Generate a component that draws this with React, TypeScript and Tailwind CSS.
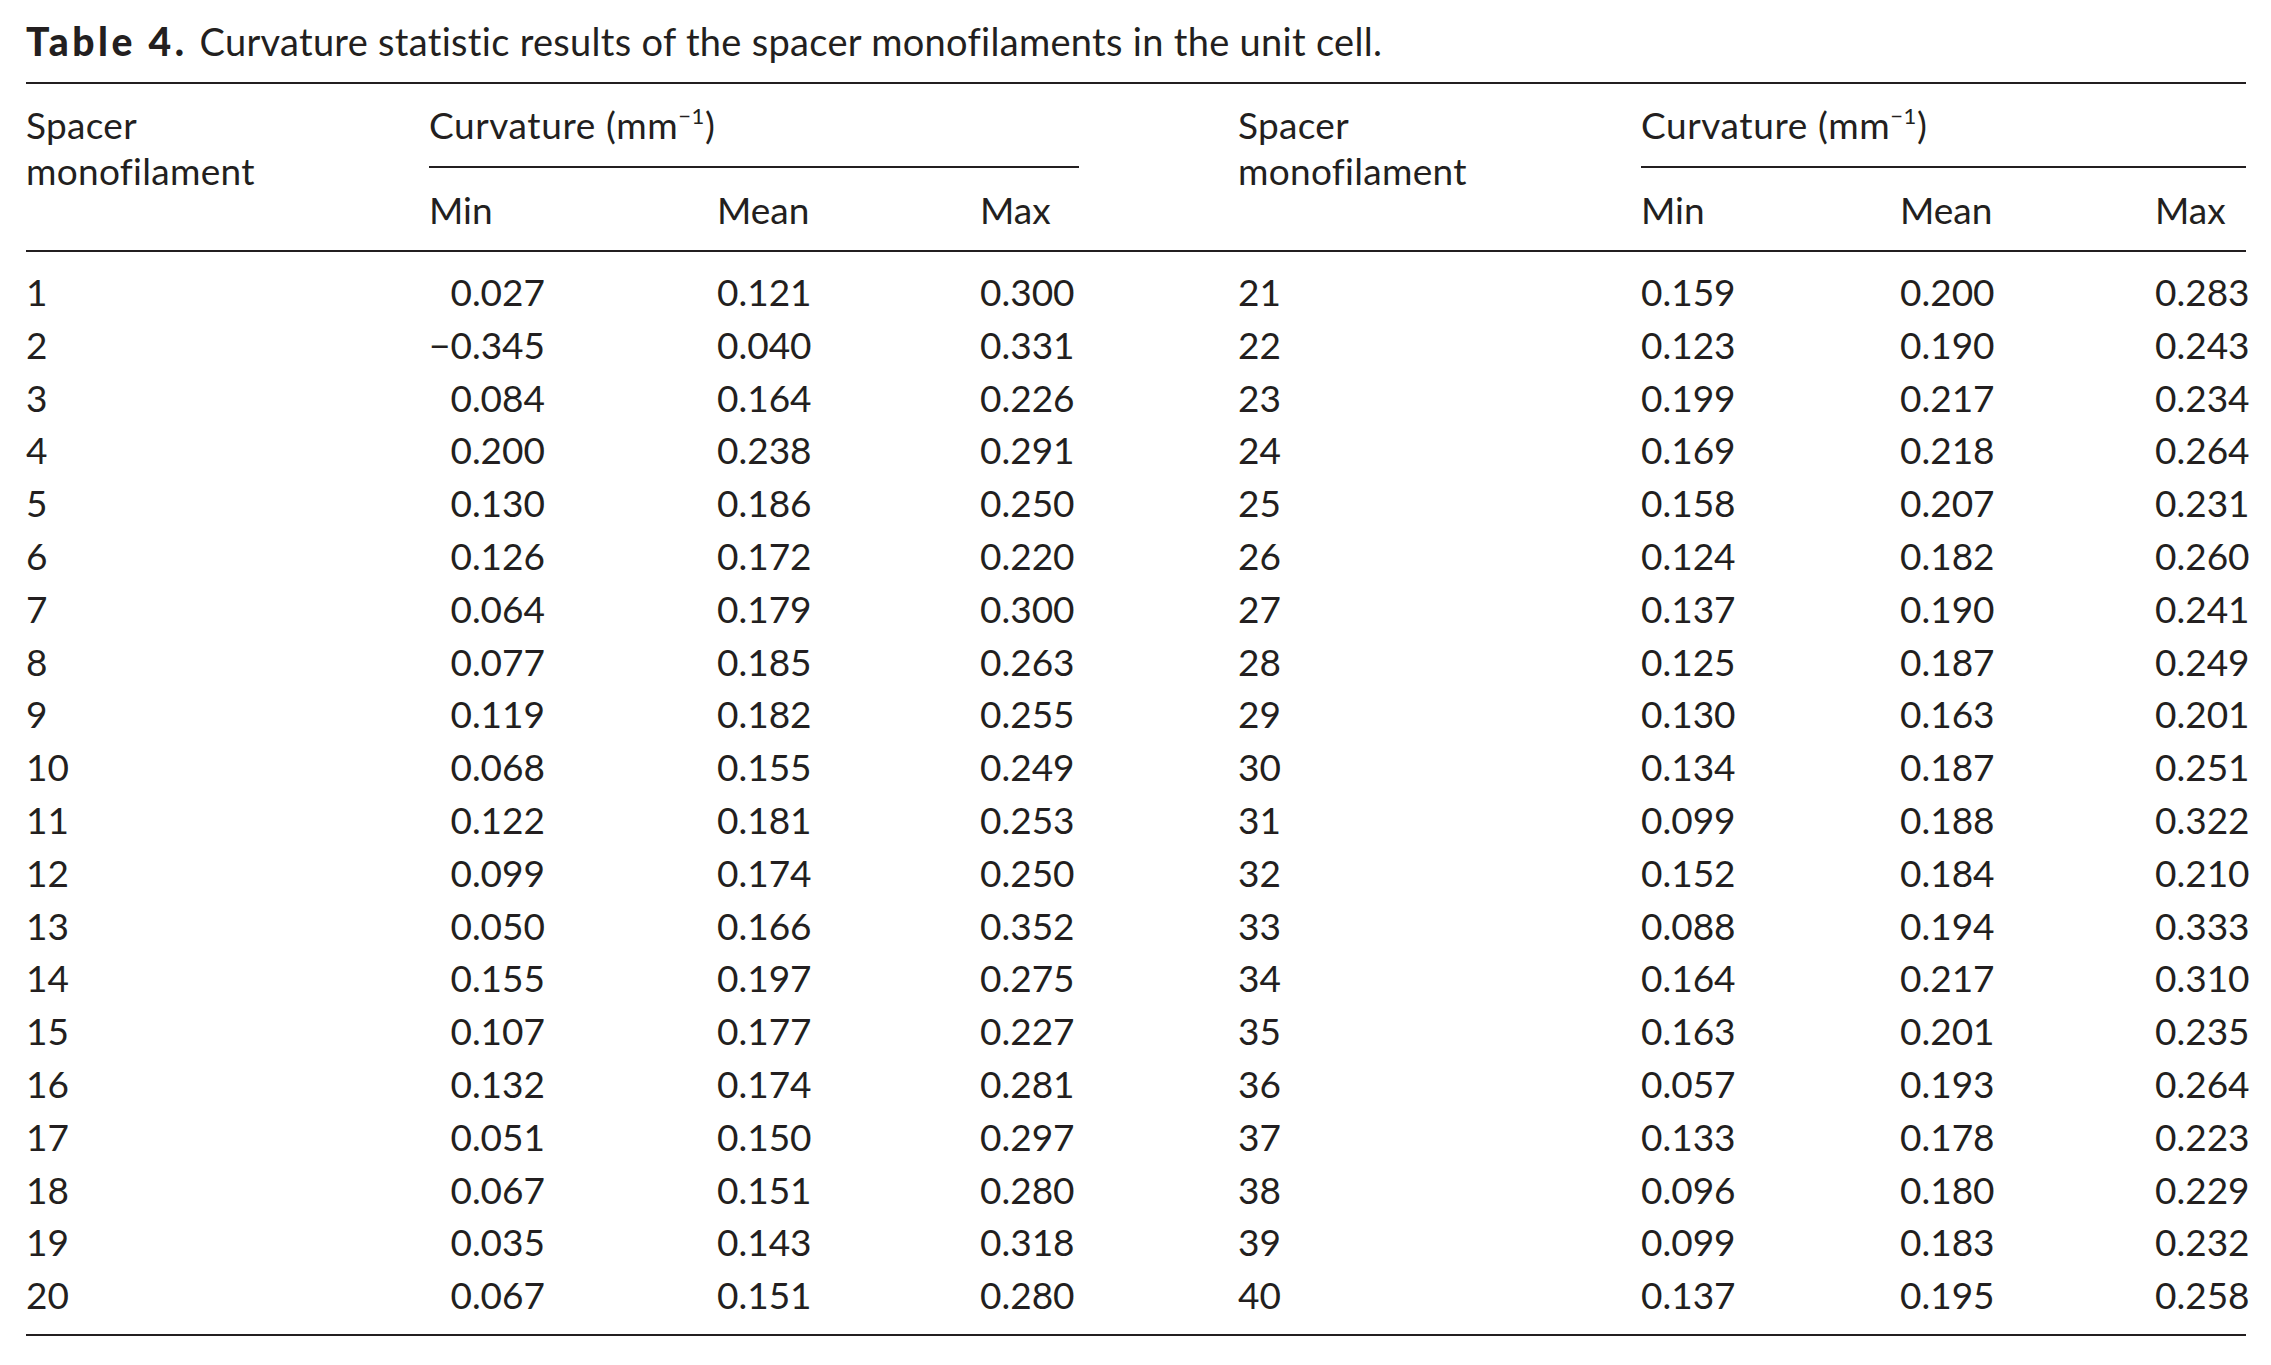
import React from "react";

const left = [
  ["1", "0.027", "0.121", "0.300"],
  ["2", "−0.345", "0.040", "0.331"],
  ["3", "0.084", "0.164", "0.226"],
  ["4", "0.200", "0.238", "0.291"],
  ["5", "0.130", "0.186", "0.250"],
  ["6", "0.126", "0.172", "0.220"],
  ["7", "0.064", "0.179", "0.300"],
  ["8", "0.077", "0.185", "0.263"],
  ["9", "0.119", "0.182", "0.255"],
  ["10", "0.068", "0.155", "0.249"],
  ["11", "0.122", "0.181", "0.253"],
  ["12", "0.099", "0.174", "0.250"],
  ["13", "0.050", "0.166", "0.352"],
  ["14", "0.155", "0.197", "0.275"],
  ["15", "0.107", "0.177", "0.227"],
  ["16", "0.132", "0.174", "0.281"],
  ["17", "0.051", "0.150", "0.297"],
  ["18", "0.067", "0.151", "0.280"],
  ["19", "0.035", "0.143", "0.318"],
  ["20", "0.067", "0.151", "0.280"],
];

const right = [
  ["21", "0.159", "0.200", "0.283"],
  ["22", "0.123", "0.190", "0.243"],
  ["23", "0.199", "0.217", "0.234"],
  ["24", "0.169", "0.218", "0.264"],
  ["25", "0.158", "0.207", "0.231"],
  ["26", "0.124", "0.182", "0.260"],
  ["27", "0.137", "0.190", "0.241"],
  ["28", "0.125", "0.187", "0.249"],
  ["29", "0.130", "0.163", "0.201"],
  ["30", "0.134", "0.187", "0.251"],
  ["31", "0.099", "0.188", "0.322"],
  ["32", "0.152", "0.184", "0.210"],
  ["33", "0.088", "0.194", "0.333"],
  ["34", "0.164", "0.217", "0.310"],
  ["35", "0.163", "0.201", "0.235"],
  ["36", "0.057", "0.193", "0.264"],
  ["37", "0.133", "0.178", "0.223"],
  ["38", "0.096", "0.180", "0.229"],
  ["39", "0.099", "0.183", "0.232"],
  ["40", "0.137", "0.195", "0.258"],
];

const cols = "grid grid-cols-[403px_288px_263px_258px_403px_259px_255px_91px]";

const Curvature = () => (
  <span className="tracking-[0.6px]">
    Curvature (mm<sup className="text-[22px] -top-[0.7em]">−1</sup>)
  </span>
);

export default function App() {
  return (
    <div className="w-[2271px] h-[1365px] bg-white text-[#231f20] text-[37px] font-['Lato',sans-serif] pl-[26px] pr-[25px] pt-[21px]">
      {/* Caption */}
      <p className="leading-[40px] whitespace-nowrap text-[38px]">
        <span className="font-black text-[39px] tracking-[3.5px] mr-[12px]">Table 4.</span>
        <span className="tracking-[0.3px]">
          Curvature statistic results of the spacer monofilaments in the unit cell.
        </span>
      </p>

      {/* Table */}
      <div className="mt-[21px] border-t-2 border-b-2 border-[#231f20]">
        {/* Header */}
        <div className={`${cols} border-b-2 border-[#231f20] leading-[46px] pt-[18px]`}>
          <div className="row-span-2 tracking-[0.3px]">
            Spacer
            <br />
            monofilament
          </div>
          <div className="col-span-3">
            <div className="w-[650px] border-b-2 border-[#231f20] pb-[18px]">
              <Curvature />
            </div>
          </div>
          <div className="row-span-2 tracking-[0.3px]">
            Spacer
            <br />
            monofilament
          </div>
          <div className="col-span-3">
            <div className="border-b-2 border-[#231f20] pb-[18px]">
              <Curvature />
            </div>
          </div>
          <div className="pt-[19px] pb-[17px]">Min</div>
          <div className="pt-[19px] pb-[17px]">Mean</div>
          <div className="pt-[19px] pb-[17px]">Max</div>
          <div className="pt-[19px] pb-[17px]">Min</div>
          <div className="pt-[19px] pb-[17px]">Mean</div>
          <div className="pt-[19px] pb-[17px]">Max</div>
        </div>

        {/* Body */}
        <div className="pt-[14px] pb-[12px] leading-[52.8px]">
          {left.map((l, i) => {
            const r = right[i];
            return (
              <div key={l[0]} className={cols}>
                <div>{l[0]}</div>
                <div>
                  <span className="inline-block w-[116px] text-right">{l[1]}</span>
                </div>
                <div>{l[2]}</div>
                <div>{l[3]}</div>
                <div>{r[0]}</div>
                <div>{r[1]}</div>
                <div>{r[2]}</div>
                <div>{r[3]}</div>
              </div>
            );
          })}
        </div>
      </div>
    </div>
  );
}
